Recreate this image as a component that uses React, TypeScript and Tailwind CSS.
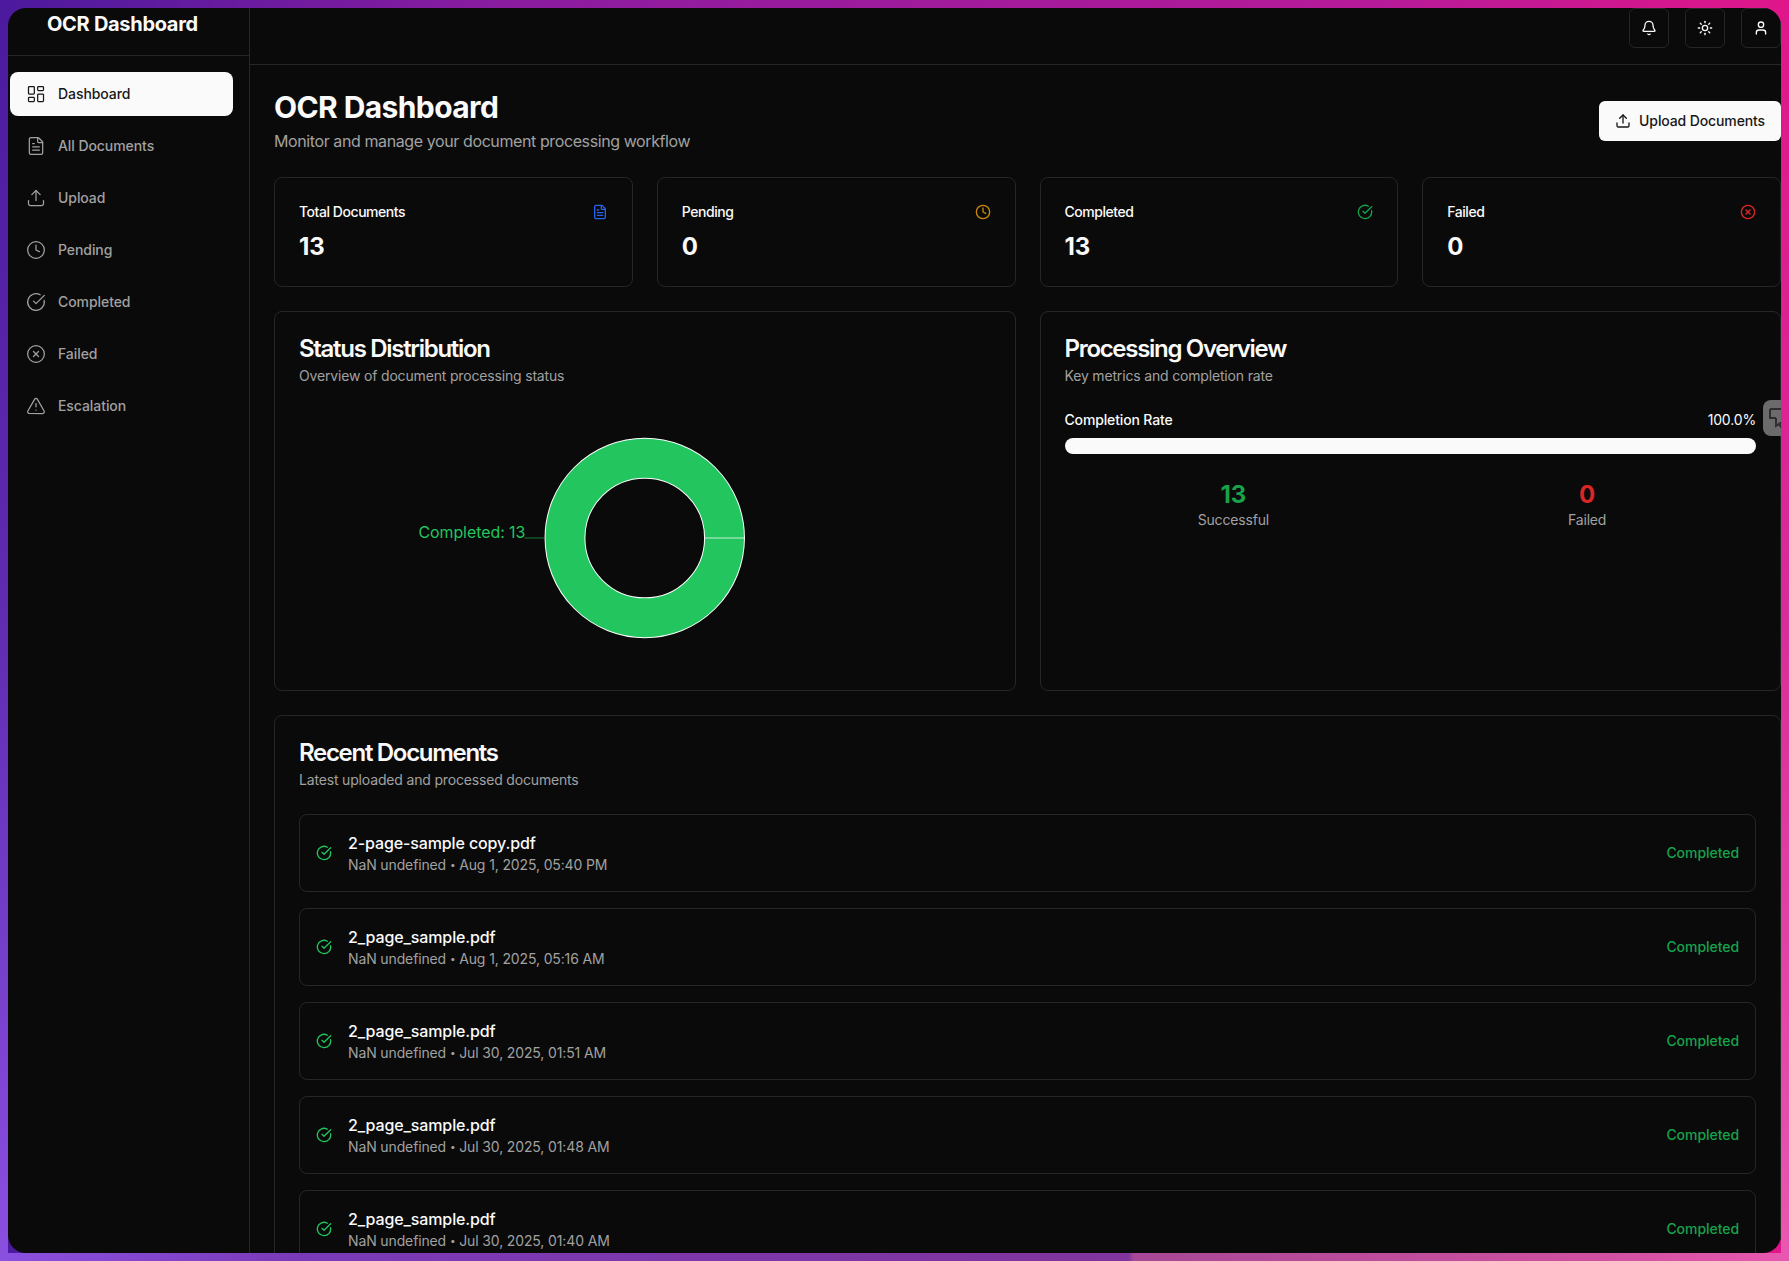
import {
  Bell,
  CircleCheckBig,
  CircleX,
  Clock,
  FileText,
  LayoutDashboard,
  Sun,
  TriangleAlert,
  Upload,
  User,
  type LucideIcon,
} from 'lucide-react';

const navItems: { label: string; icon: LucideIcon; active?: boolean }[] = [
  { label: 'Dashboard', icon: LayoutDashboard, active: true },
  { label: 'All Documents', icon: FileText },
  { label: 'Upload', icon: Upload },
  { label: 'Pending', icon: Clock },
  { label: 'Completed', icon: CircleCheckBig },
  { label: 'Failed', icon: CircleX },
  { label: 'Escalation', icon: TriangleAlert },
];

const stats = [
  { label: 'Total Documents', value: 13, icon: FileText, color: 'text-[#2563eb]' },
  { label: 'Pending', value: 0, icon: Clock, color: 'text-[#ca8a04]' },
  { label: 'Completed', value: 13, icon: CircleCheckBig, color: 'text-[#16a34a]' },
  { label: 'Failed', value: 0, icon: CircleX, color: 'text-[#dc2626]' },
];

const documents = [
  { name: '2-page-sample copy.pdf', date: 'Aug 1, 2025, 05:40 PM' },
  { name: '2_page_sample.pdf', date: 'Aug 1, 2025, 05:16 AM' },
  { name: '2_page_sample.pdf', date: 'Jul 30, 2025, 01:51 AM' },
  { name: '2_page_sample.pdf', date: 'Jul 30, 2025, 01:48 AM' },
  { name: '2_page_sample.pdf', date: 'Jul 30, 2025, 01:40 AM' },
];

function Sidebar() {
  return (
    <aside className="flex w-[242px] shrink-0 flex-col border-r border-[#262626]">
      <div className="h-[48px] border-b border-[#262626] pl-[39px] pt-[2px]">
        <h1 className="text-xl font-bold tracking-[-0.3px] text-[#fafafa]">OCR Dashboard</h1>
      </div>
      <nav className="flex flex-col gap-2 pl-[2px] pr-4 pt-4">
        {navItems.map(({ label, icon: Icon, active }) => (
          <a
            key={label}
            className={
              active
                ? 'flex h-11 items-center gap-3 rounded-lg bg-[#fafafa] px-4 text-sm font-medium tracking-[-0.07px] text-[#171717]'
                : 'flex h-11 items-center gap-3 rounded-lg px-4 text-sm font-medium tracking-[-0.07px] text-[#a1a1a1]'
            }>
            <Icon className="h-5 w-5" strokeWidth={1.5} />
            {label}
          </a>
        ))}
      </nav>
    </aside>
  );
}

function TopBar() {
  return (
    <header className="flex h-[57px] shrink-0 items-start justify-end gap-4 border-b border-[#262626]">
      {[Bell, Sun, User].map((Icon, i) => (
        <button
          key={i}
          className="flex h-10 w-10 items-center justify-center rounded-md border border-[#262626] text-[#fafafa]">
          <Icon className="h-4 w-4" />
        </button>
      ))}
    </header>
  );
}

function DonutChart() {
  return (
    <svg className="h-64 w-full" viewBox="0 0 693.5 256">
      <path d="M226 128 L246 128" stroke="#22c55e" strokeOpacity="0.6" fill="none" />
      <text x="227" y="128" textAnchor="end" fontSize="16" letterSpacing="-0.05" fill="#22c55e">
        Completed: 13
      </text>
      <circle cx="346.75" cy="128" r="80" fill="none" stroke="#ffffff" strokeWidth="41" />
      <circle cx="346.75" cy="128" r="80" fill="none" stroke="#22c55e" strokeWidth="39" />
      <path d="M406.75 128 L446.75 128" stroke="#ffffff" strokeOpacity="0.75" />
    </svg>
  );
}

function CardHeader({ title, subtitle }: { title: string; subtitle: string }) {
  return (
    <div className="flex flex-col gap-1.5">
      <h3 className="h-6 pt-px text-2xl leading-none font-semibold tracking-[-1.3px] text-[#fafafa]">{title}</h3>
      <p className="text-sm tracking-[-0.17px] text-[#a1a1a1]">{subtitle}</p>
    </div>
  );
}

export default function App() {
  return (
    <div
      className="h-screen overflow-hidden p-2 [background:linear-gradient(90deg,#8a50e0_0,#7a3ab8_300px,#80349c_1128px,#a84896_1134px,#d050a0_1600px,#e858b0_100%)_bottom/100%_8px_no-repeat,linear-gradient(to_bottom,#4c1a9e,#5f2bb0_48%,#8a50e0)_left/8px_100%_no-repeat,linear-gradient(to_bottom,#e0168a,#d82c98_48%,#e858b0)_right/8px_100%_no-repeat,linear-gradient(90deg,#4c1a9e,#8a1ca0_28%,#b81a98_78%,#e0168a)]"
      style={{ fontFamily: 'Inter, "Noto Sans", sans-serif' }}>
      <div className="relative flex h-full overflow-hidden rounded-[18px] bg-[#0a0a0a] text-[#fafafa]">
        <Sidebar />
        <div className="flex min-w-0 flex-1 flex-col">
          <TopBar />
          <main className="flex flex-col gap-6 overflow-hidden pl-6 pt-6">
            <div className="flex items-center justify-between">
              <div>
                <h2 className="text-3xl font-bold tracking-[-0.6px] text-[#fafafa]">OCR Dashboard</h2>
                <p className="mt-1 text-base tracking-[-0.4px] text-[#a1a1a1]">
                  Monitor and manage your document processing workflow
                </p>
              </div>
              <button className="flex h-10 items-center gap-2 rounded-md bg-[#fafafa] px-4 text-sm font-medium tracking-[-0.12px] text-[#171717]">
                <Upload className="h-4 w-4" />
                Upload Documents
              </button>
            </div>

            <div className="grid grid-cols-4 gap-6">
              {stats.map(({ label, value, icon: Icon, color }) => (
                <div key={label} className="rounded-lg border border-[#262626] p-6">
                  <div className="flex items-center justify-between pb-2">
                    <span className="text-sm font-medium tracking-[-0.45px] text-[#fafafa]">{label}</span>
                    <Icon className={`h-4 w-4 ${color}`} />
                  </div>
                  <div className="h-8 pt-px text-2xl font-bold text-[#fafafa]">{value}</div>
                </div>
              ))}
            </div>

            <div className="grid grid-cols-2 gap-6">
              <div className="rounded-lg border border-[#262626] p-6">
                <CardHeader title="Status Distribution" subtitle="Overview of document processing status" />
                <div className="mt-6">
                  <DonutChart />
                </div>
              </div>
              <div className="rounded-lg border border-[#262626] p-6">
                <CardHeader title="Processing Overview" subtitle="Key metrics and completion rate" />
                <div className="mt-6">
                  <div className="mb-2 flex items-center justify-between text-sm font-medium tracking-[-0.15px] text-[#fafafa]">
                    <span>Completion Rate</span>
                    <span className="font-normal">100.0%</span>
                  </div>
                  <div className="h-4 w-full rounded-full bg-[#fafafa]" />
                  <div className="mt-6 grid grid-cols-2 gap-4 text-center">
                    <div>
                      <div className="h-8 pt-px text-2xl font-bold text-[#16a34a]">13</div>
                      <div className="text-sm tracking-[-0.17px] text-[#a1a1a1]">Successful</div>
                    </div>
                    <div>
                      <div className="h-8 pt-px text-2xl font-bold text-[#dc2626]">0</div>
                      <div className="text-sm tracking-[-0.17px] text-[#a1a1a1]">Failed</div>
                    </div>
                  </div>
                </div>
              </div>
            </div>

            <div className="rounded-lg border border-[#262626] p-6">
              <CardHeader title="Recent Documents" subtitle="Latest uploaded and processed documents" />
              <div className="mt-6 flex flex-col gap-4">
                {documents.map((doc, i) => (
                  <div key={i} className="flex items-center justify-between rounded-lg border border-[#262626] p-4">
                    <div className="flex items-center gap-4">
                      <CircleCheckBig className="h-4 w-4 text-[#22c55e]" />
                      <div>
                        <p className="font-medium tracking-[-0.12px] text-[#fafafa]">{doc.name}</p>
                        <p className="text-sm tracking-[-0.13px] text-[#a1a1a1]">
                          NaN undefined <span className="align-[2px] text-[10px]">•</span> {doc.date}
                        </p>
                      </div>
                    </div>
                    <span className="text-sm font-medium tracking-[-0.05px] text-[#16a34a]">Completed</span>
                  </div>
                ))}
              </div>
            </div>
          </main>
        </div>
        <div className="absolute right-0 top-[392px] flex h-9 w-[18px] items-center overflow-hidden rounded-l-lg bg-[#6b6b6b] pl-1">
          <svg className="h-6 w-6 shrink-0 text-[#2e2e2e]" viewBox="0 0 24 24" fill="none" stroke="currentColor" strokeWidth="2">
            <path d="M3 3h16v9M3 3v9h6M9 12v8l3-2 2 3 2-1-2-3h4" />
          </svg>
        </div>
      </div>
    </div>
  );
}
